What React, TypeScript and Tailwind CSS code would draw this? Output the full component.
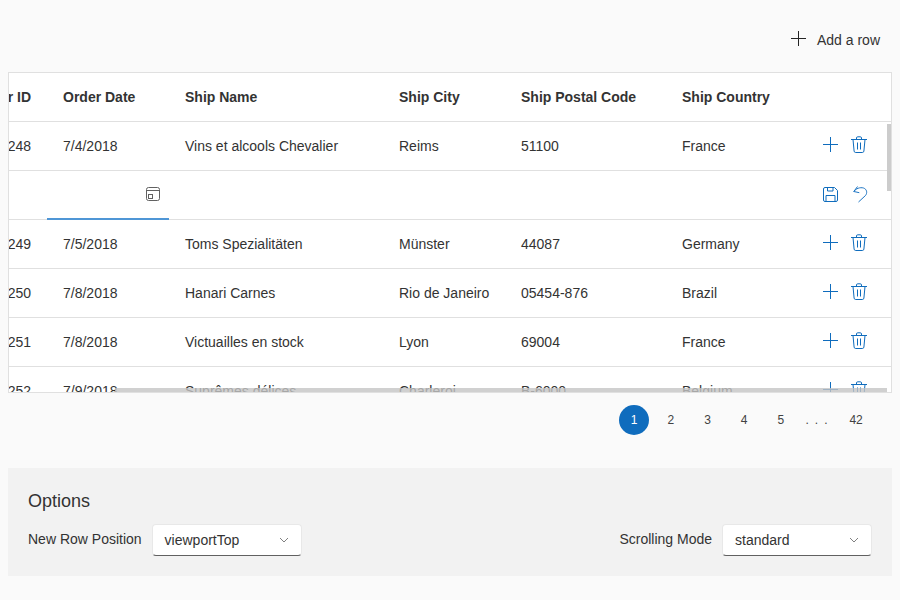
const rows = [
  { id: "248", date: "7/4/2018", name: "Vins et alcools Chevalier", city: "Reims", code: "51100", country: "France" },
  { editing: true },
  { id: "249", date: "7/5/2018", name: "Toms Spezialitäten", city: "Münster", code: "44087", country: "Germany" },
  { id: "250", date: "7/8/2018", name: "Hanari Carnes", city: "Rio de Janeiro", code: "05454-876", country: "Brazil" },
  { id: "251", date: "7/8/2018", name: "Victuailles en stock", city: "Lyon", code: "69004", country: "France" },
  { id: "252", date: "7/9/2018", name: "Suprêmes délices", city: "Charleroi", code: "B-6000", country: "Belgium" },
];

function PlusIcon({ color }: { color: string }) {
  return (
    <svg width="16" height="16" viewBox="0 0 16 16" fill="none" stroke={color} strokeWidth="1">
      <path d="M0 7.500h15M7.500 0v15" />
    </svg>
  );
}

function TrashIcon() {
  return (
    <svg width="16" height="18" viewBox="0 0 16 18" fill="none" stroke="#0f6cbd" strokeWidth="1">
      <path d="M0 3.500h16" />
      <path d="M5.500 3.500V2a1.200 1.200 0 0 1 1.200-1.200h2.600A1.200 1.200 0 0 1 10.500 2v1.500" />
      <path d="M2 3.500l1.100 11.600a1.600 1.600 0 0 0 1.600 1.400h6.600a1.600 1.600 0 0 0 1.600-1.400L14 3.500" />
      <path d="M6.500 6.500v7M9.500 6.500v7" />
    </svg>
  );
}

function SaveIcon() {
  return (
    <svg width="15" height="15" viewBox="0 0 15 15" fill="none" stroke="#0f6cbd" strokeWidth="1">
      <path d="M2 0.500h9.500l3 3v9.500a1.500 1.500 0 0 1-1.500 1.500H2A1.500 1.500 0 0 1 0.500 13V2A1.500 1.500 0 0 1 2 0.500z" />
      <path d="M4.500 0.500v3.500h5.500v-3.500" />
      <path d="M3 14.500v-6h9v6" />
    </svg>
  );
}

function UndoIcon() {
  return (
    <svg width="15" height="17" viewBox="0 0 15 17" fill="none" stroke="#1f76c4" strokeWidth="1">
      <path d="M4.500 0.500L0.800 5.500l5.500 1.200" />
      <path d="M0.800 5.500C3 2.500 7 1 10.500 2c3.500 1.200 4 5 2 7.500L5.500 16" />
    </svg>
  );
}

function CalendarIcon() {
  return (
    <svg width="14" height="14" viewBox="0 0 14 14" fill="none" stroke="#616161" strokeWidth="1">
      <rect x="0.500" y="0.500" width="13" height="13" rx="2" />
      <path d="M0.500 3.500h13" />
      <rect x="2.500" y="7.500" width="4" height="4" />
    </svg>
  );
}

function Chevron() {
  return (
    <svg width="10" height="6" viewBox="0 0 10 6" fill="none" stroke="#808080" strokeWidth="1">
      <path d="M1 1l4 4 4-4" />
    </svg>
  );
}

function Select({ value }: { value: string }) {
  return (
    <div className="flex h-8 w-[150px] items-center justify-between rounded border border-[#e8e8e8] border-b-[#616161] bg-white pl-3 pr-3 text-sm text-[#333333]">
      <span>{value}</span>
      <Chevron />
    </div>
  );
}

export default function App() {
  return (
    <div className="h-[600px] w-[900px] overflow-hidden bg-[#fafafa] px-2 font-['Liberation_Sans',sans-serif] text-sm text-[#333333]">
      <div className="flex h-[72px] items-start justify-end pr-3 pt-[30px]">
        <div className="flex items-start gap-[10px]">
          <div className="mt-px">
            <PlusIcon color="#242424" />
          </div>
          <span>Add a row</span>
        </div>
      </div>

      <div className="relative h-[321px] overflow-hidden border border-[#e0e0e0] bg-white">
        <div className="flex h-[49px] items-center border-b border-[#e0e0e0] font-bold">
          <div className="flex w-[38px] justify-end overflow-hidden whitespace-nowrap pr-4">Order ID</div>
          <div className="w-[122px] pl-4">Order Date</div>
          <div className="w-[214px] pl-4">Ship Name</div>
          <div className="w-[122px] pl-4">Ship City</div>
          <div className="w-[161px] pl-4">Ship Postal Code</div>
          <div className="w-[140px] pl-4">Ship Country</div>
        </div>

        {rows.map((row, i) =>
          row.editing ? (
            <div key={i} className="flex h-[49px] items-stretch border-b border-[#e0e0e0]">
              <div className="w-[38px]" />
              <div className="-mb-px flex w-[122px] items-center justify-end border-b-2 border-[#4f96d6] pb-px pr-[9px]">
                <CalendarIcon />
              </div>
              <div className="flex-1" />
              <div className="flex w-[68px] items-center gap-[15px] pb-px">
                <SaveIcon />
                <UndoIcon />
              </div>
            </div>
          ) : (
            <div key={i} className="flex h-[49px] shrink-0 items-center border-b border-[#e0e0e0]">
              <div className="flex w-[38px] justify-end overflow-hidden pr-4">{"10" + row.id}</div>
              <div className="w-[122px] pl-4">{row.date}</div>
              <div className="w-[214px] pl-4">{row.name}</div>
              <div className="w-[122px] pl-4">{row.city}</div>
              <div className="w-[161px] pl-4">{row.code}</div>
              <div className="w-[157px] pl-4">{row.country}</div>
              <div className="flex items-center gap-[12px] pb-[2px]">
                <PlusIcon color="#0f6cbd" />
                <TrashIcon />
              </div>
            </div>
          ),
        )}

        <div className="absolute right-0 top-[51px] h-[67px] w-1 bg-[#cccccc]" />
        <div className="absolute bottom-0 left-[106px] right-1 h-1 bg-[#c4c4c4]/80" />
      </div>

      <div className="flex h-[75px] items-start justify-end gap-[6.7px] pr-[14.4px] pt-3 text-xs text-[#424242]">
        <div className="flex h-[30px] w-[30px] items-center justify-center rounded-full bg-[#0f6cbd] text-white">1</div>
        <div className="flex h-[30px] w-[30px] items-center justify-center">2</div>
        <div className="flex h-[30px] w-[30px] items-center justify-center">3</div>
        <div className="flex h-[30px] w-[30px] items-center justify-center">4</div>
        <div className="flex h-[30px] w-[30px] items-center justify-center">5</div>
        <div className="flex h-[30px] w-[25.4px] items-center justify-center whitespace-pre pl-1 tracking-[1.4px]">. . .</div>
        <div className="flex h-[30px] w-[43px] items-center justify-center">42</div>
      </div>

      <div className="h-[108px] bg-[#f2f2f2] px-5 pt-[22px]">
        <div className="text-lg leading-[22px]">Options</div>
        <div className="mt-[12px] flex items-start justify-between">
          <div className="flex items-start gap-[10px]">
            <span className="leading-[30px]">New Row Position</span>
            <Select value="viewportTop" />
          </div>
          <div className="flex items-start gap-[10px]">
            <span className="leading-[30px]">Scrolling Mode</span>
            <Select value="standard" />
          </div>
        </div>
      </div>
    </div>
  );
}
